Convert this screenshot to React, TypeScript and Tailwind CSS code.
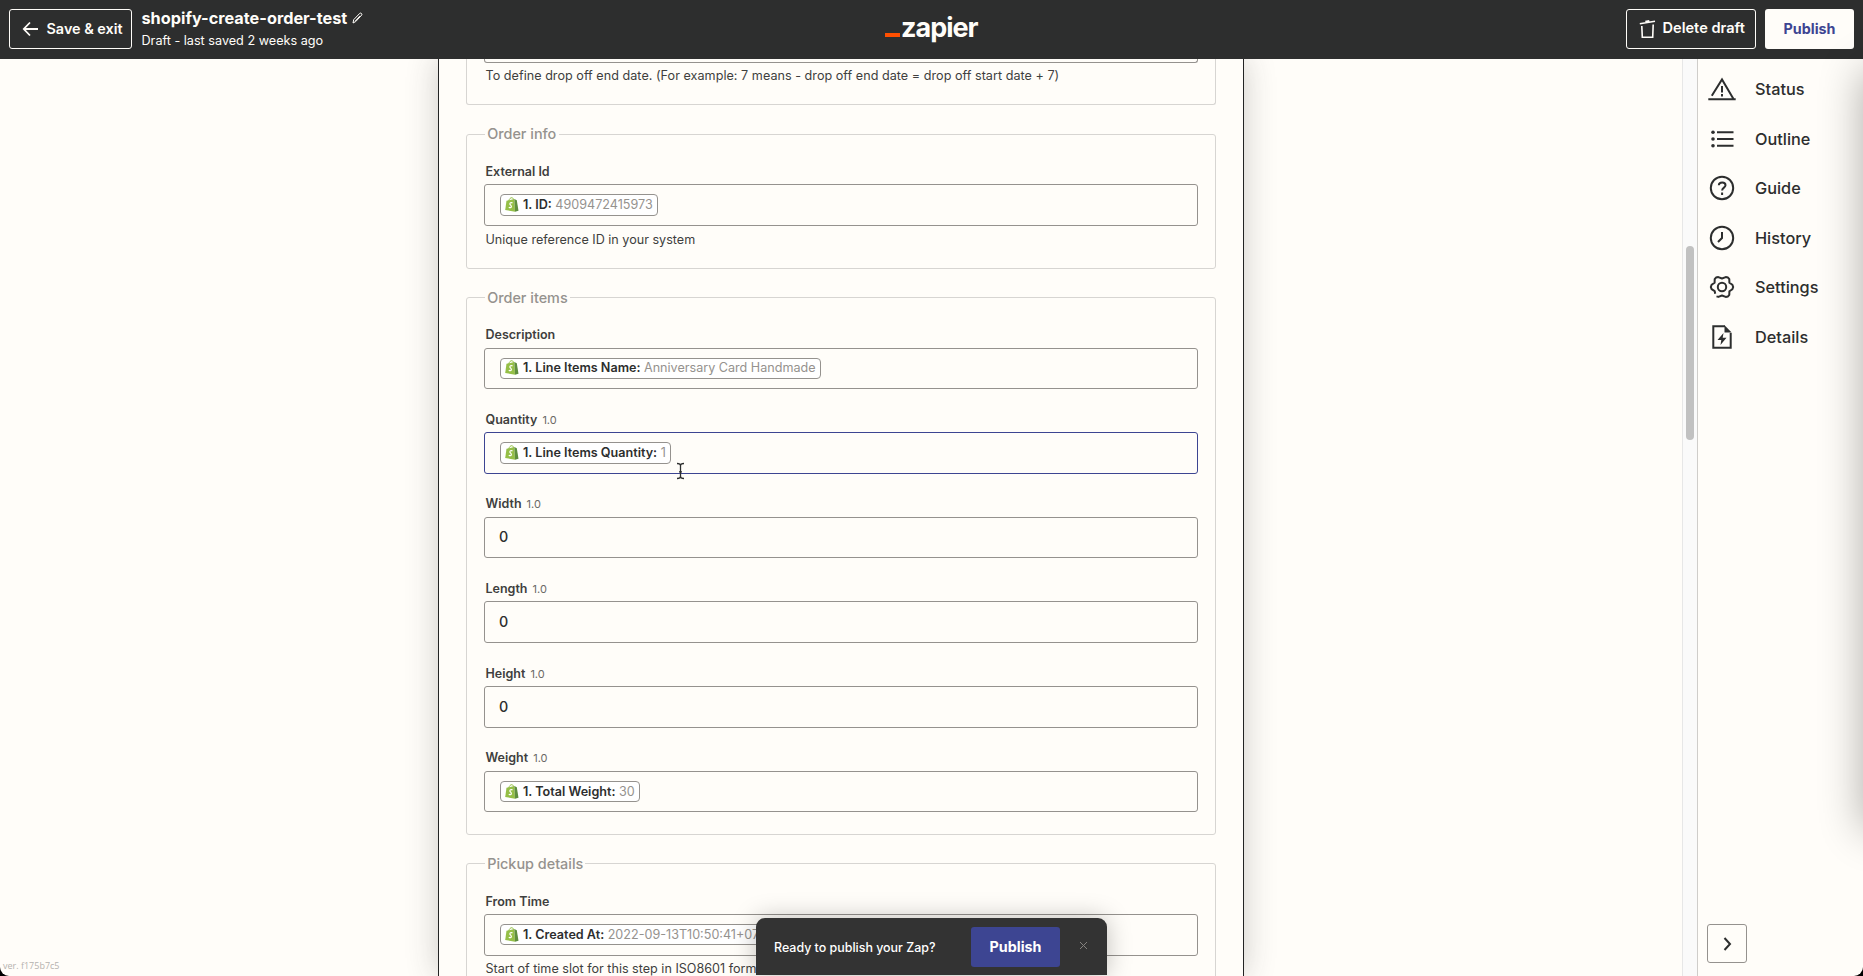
import type { ReactNode } from "react";

function ShopifyBag() {
  return (
    <svg width="14" height="15" viewBox="0 0 14 15" className="-ml-[0.500px] mb-[1px] mr-[0.500px] shrink-0">
      <path d="M3.800 4C4.200 1.900 5.500.6 6.900.7c1.200.1 1.600 1.300 1.600 2.700" fill="none" stroke="#95bf47" strokeWidth="1" />
      <path d="M1.500 3.800 9.300 2 10 14.700.2 12.900z" fill="#95bf47" />
      <path d="M9.300 2 11.800 3.200 13.500 13.700 10 14.700z" fill="#5e8e3e" />
      <path d="M7.500 5.900c-1.500-.7-2.800 0-2.600 1.200.2 1 1.600 1.300 1.500 2.500-.1 1.200-1.500 1.300-2.600.6" fill="none" stroke="#fff" strokeWidth="1.200" />
    </svg>
  );
}

function Pill({ name, value }: { name: string; value: string }) {
  return (
    <span className="flex h-[21.400px] items-center whitespace-nowrap rounded-[4px] border border-[#95928e] bg-white pl-[4.500px] pr-[4.700px] text-[12.600px]">
      <ShopifyBag />
      <b className="ml-[3.500px] mt-[1px] font-semibold text-[#2d2e2e]">{name}</b>
      <span className="ml-[3.500px] mt-[1px] text-[#95928e]">{value}</span>
    </span>
  );
}

type FieldProps = { label: string; hint?: string; help?: string; active?: boolean; children: ReactNode };

function Field({ label, hint, help, active, children }: FieldProps) {
  return (
    <div>
      <div className="mb-[2.450px] flex h-[20.600px] items-end pl-[1.500px] text-[12.500px] leading-5">
        <span className="font-semibold text-[#403f3e]">{label}</span>
        {hint && <span className="ml-[5px] text-[11px] text-[#6b6966]">{hint}</span>}
      </div>
      <div
        className={`flex h-[41.600px] items-center rounded-[3px] border pl-[15px] ${active ? "border-[#3d4592]" : "border-[#95928e]"}`}
      >
        {children}
      </div>
      {help && <Help>{help}</Help>}
    </div>
  );
}

function Help({ children }: { children: ReactNode }) {
  return <p className="mt-[3.700px] h-5 whitespace-nowrap pl-[1.500px] text-[12.600px] leading-5 text-[#403f3e]">{children}</p>;
}

function Group({ title, className, children }: { title: string; className: string; children: ReactNode }) {
  return (
    <fieldset className={`mx-[27px] rounded-[3px] border border-[#d7d5d2] px-[17px] ${className}`}>
      <legend className="ml-[1px] h-5 px-[2.200px] pt-[0.200px] text-[14.400px] font-medium leading-5 text-[#95928e]">
        {title}
      </legend>
      <div className="flex flex-col gap-5 pt-[17.100px]">{children}</div>
    </fieldset>
  );
}

function Zero() {
  return <span className="-ml-[1px] pb-[1px] text-[14.300px] font-medium text-[#2d2e2e]">0</span>;
}

function Icon({ children }: { children: ReactNode }) {
  return (
    <svg width="28" height="28" viewBox="0 0 28 28" fill="none" stroke="#2d2e2e" strokeWidth="2" className="shrink-0">
      {children}
    </svg>
  );
}

const nav: { label: string; icon: ReactNode }[] = [
  {
    label: "Status",
    icon: (
      <>
        <path d="M3.800 20.700 14 4.500l11.500 19.500M.300 24.300h27.400" />
        <path d="M14 11v6.500M14 19v2.500" />
      </>
    ),
  },
  {
    label: "Outline",
    icon: (
      <>
        <path d="M9 7.300h16.500M9 14h16.500M9 20.700h16.500" />
        <g fill="#2d2e2e" stroke="none">
          <circle cx="5" cy="7.300" r="1.800" />
          <circle cx="5" cy="14" r="1.800" />
          <circle cx="5" cy="20.700" r="1.800" />
        </g>
      </>
    ),
  },
  {
    label: "Guide",
    icon: (
      <>
        <circle cx="14" cy="14" r="11.200" />
        <path d="M10.800 11.300c.2-3.700 6.700-3.700 6.700 0 0 2.400-3.300 2.300-3.400 5.200M14.100 18.600v2.300" />
      </>
    ),
  },
  {
    label: "History",
    icon: (
      <>
        <circle cx="14" cy="14" r="11.200" />
        <path d="M14 8v6l-4 4" />
      </>
    ),
  },
  {
    label: "Settings",
    icon: (
      <>
        <circle cx="14" cy="14" r="4.200" />
        <path
          d="M7.200 20.800 6.700 18.200 3.600 16.200 2.800 14 3.600 11.800 6.600 9.700 6.700 6.200 8 4.600 10.300 4.100 14 5.500 17.700 4.100 20 4.600 21.300 6.200 21.400 9.700 24.400 11.800 25.200 14 24.400 16.200 21.400 18.300 21.300 21.800 20 23.400 17.700 23.900 14 22.500 10.300 23.900 8.500 23.400"
          strokeLinejoin="round"
        />
      </>
    ),
  },
  {
    label: "Details",
    icon: (
      <>
        <path d="M17 3.300H5.300v21.400h17.400V10" />
        <path d="M16.500 2.300v7.200h7.200z" fill="#2d2e2e" stroke="none" />
        <path d="m15.500 10-6 7h3.800l-.8 5 6-7.200h-3.800z" fill="#2d2e2e" stroke="none" />
      </>
    ),
  },
];

function Header() {
  return (
    <header className="flex h-[59px] shrink-0 items-center bg-[#2d2e2e] px-[9px] pb-[1px] text-[#fffdf9]">
      <button className="flex h-10 w-[123px] items-center rounded-[3px] border border-[#fffdf9] pl-3 text-[14.400px] font-semibold">
        <svg width="17" height="16" viewBox="0 0 17 16" fill="none" stroke="currentColor" strokeWidth="1.800">
          <path d="M16 8H2M8 1.500 1.800 8 8 14.500" />
        </svg>
        <span className="ml-[7.500px] whitespace-nowrap">Save &amp; exit</span>
      </button>
      <div className="ml-[9.500px] flex w-[743.500px] flex-col">
        <div className="flex h-[22px] items-center gap-[5px] text-[16.300px] font-bold">
          <span className="whitespace-nowrap">shopify-create-order-test</span>
          <svg width="11" height="12" viewBox="0 0 11 12" fill="none" stroke="currentColor" strokeWidth="1" className="mb-[1px]">
            <path d="M1 11 1.700 7.700 7.800 1.300c1-.9 2.800.7 1.900 1.800L3.700 9.600zM3 9.300l5-5.400" />
          </svg>
        </div>
        <div className="h-[22px] text-[12.650px] leading-[23px]">Draft - last saved 2 weeks ago</div>
      </div>
      <div className="flex items-center pb-[2px]">
        <span className="mt-[14px] h-[4px] w-[15px] bg-[#ff4f00]" />
        <span className="ml-px text-[27px] font-bold leading-[30px] tracking-[-1px]">zapier</span>
      </div>
      <div className="ml-auto flex gap-[9px] text-[14.300px]">
        <button className="flex h-10 w-[130px] items-center rounded-[3px] border border-[#fffdf9] pl-3 text-[14.600px] font-semibold">
          <svg width="17" height="20" viewBox="0 0 17 20" fill="none" stroke="currentColor" strokeWidth="1.600">
            <path d="M.8 4.800 16 2.200M6.300 2.600l4-.8M2.800 7l.5 11.200h10.400L14.200 5.500" />
          </svg>
          <span className="ml-[6.500px] whitespace-nowrap">Delete draft</span>
        </button>
        <button className="h-10 w-[89px] rounded-[3px] bg-[#fffdf9] font-bold text-[#3d4592]">Publish</button>
      </div>
    </header>
  );
}

export default function App() {
  return (
    <div className="h-[976px] w-[1863px] overflow-hidden bg-black font-['Inter',sans-serif]">
      <div className="relative flex h-full flex-col overflow-hidden rounded-b-[9px] bg-[#fffdf9]">
        <Header />
        <div className="flex min-h-0 flex-1">
          <main className="flex min-w-0 flex-1 items-end overflow-hidden">
            <div className="w-[438px] shrink-0 pb-[4px] pl-[3px] font-['Open_Sans',sans-serif] text-[9px] leading-3 text-[#b5b2ae]">
              ver. f175b7c5
            </div>
            <div className="h-full w-[806px] shrink-0 border-x border-[#222323] bg-[#fffdf9] shadow-[0_0_30px_rgba(45,46,46,0.24)]">
              <div className="mx-[27px] h-[46px] rounded-b-[3px] border border-t-0 border-[#d7d5d2] px-[17px]">
                <div className="h-[4px] rounded-b-[3px] border border-t-0 border-[#95928e]" />
                <div className="-mt-[1px] tracking-[0.030px]">
                  <Help>To define drop off end date. (For example: 7 means - drop off end date = drop off start date + 7)</Help>
                </div>
              </div>
              <Group title="Order info" className="mt-[19.200px] h-[144.800px]">
                <Field label="External Id" help="Unique reference ID in your system">
                  <Pill name="1. ID:" value="4909472415973" />
                </Field>
              </Group>
              <Group title="Order items" className="mt-[18.500px] h-[547.500px]">
                <Field label="Description">
                  <Pill name="1. Line Items Name:" value="Anniversary Card Handmade" />
                </Field>
                <Field label="Quantity" hint="1.0" active>
                  <Pill name="1. Line Items Quantity:" value="1" />
                </Field>
                <Field label="Width" hint="1.0">
                  <Zero />
                </Field>
                <Field label="Length" hint="1.0">
                  <Zero />
                </Field>
                <Field label="Height" hint="1.0">
                  <Zero />
                </Field>
                <Field label="Weight" hint="1.0">
                  <Pill name="1. Total Weight:" value="30" />
                </Field>
              </Group>
              <Group title="Pickup details" className="mt-[18.900px] h-[200px]">
                <Field label="From Time" help="Start of time slot for this step in ISO8601 format">
                  <Pill name="1. Created At:" value="2022-09-13T10:50:41+07:00" />
                </Field>
              </Group>
            </div>
          </main>
          <div className="w-[15px] shrink-0 border-l border-[#e7e7e7] bg-[#fafafa] pl-[3px] pt-[187px]">
            <div className="h-[194px] w-[8px] rounded-full bg-[#c1c1c1]" />
          </div>
          <aside className="flex w-[166px] shrink-0 flex-col border-l border-[#cfcdca] pb-[13px] pl-[9px] pt-[5.500px]">
            {nav.map((item) => (
              <div key={item.label} className="flex h-[49.500px] items-center gap-[19px] pl-[1px]">
                <Icon>{item.icon}</Icon>
                <span className="text-[16.300px] font-medium text-[#2d2e2e]">{item.label}</span>
              </div>
            ))}
            <button className="mt-auto flex h-[39px] w-10 items-center justify-center rounded-[3px] border border-[#95928e] pl-[1px]">
              <svg width="9" height="14" viewBox="0 0 9 14" fill="none" stroke="#2d2e2e" strokeWidth="2">
                <path d="M1.500 1 7 7l-5.500 6" />
              </svg>
            </button>
          </aside>
        </div>

        <div className="absolute left-[756px] top-[918px] flex h-[57px] w-[351px] items-center rounded-t-[9px] bg-[#333] pl-[18px] text-white shadow-[0_0_24px_rgba(0,0,0,0.250)]">
          <span className="w-[197px] whitespace-nowrap pt-[3px] text-[12.450px] font-medium">Ready to publish your Zap?</span>
          <button className="h-10 w-[89px] rounded-[3px] bg-[#3d4592] text-[14.300px] font-bold">Publish</button>
          <svg width="9" height="9" viewBox="0 0 9 9" stroke="#85827f" strokeWidth="1" className="mb-[2px] ml-[19px]">
            <path d="m1 1 7 7M8 1 1 8" />
          </svg>
        </div>

        <div className="pointer-events-none absolute left-[1863px] top-[70px] h-[760px] w-[60px] shadow-[0_0_44px_rgba(0,0,0,0.320)]" />

        <svg width="9" height="18" viewBox="0 0 9 18" fill="none" className="absolute left-[676px] top-[462px]">
          <path d="M1 1.500c2 0 3.500.5 3.500 2v11c0 1.500-1.500 2-3.500 2M8 1.500c-2 0-3.500.5-3.500 2v11c0 1.500 1.500 2 3.500 2M3 9.800h3" stroke="#2d2e2e" strokeWidth="1.300" />
        </svg>
      </div>
    </div>
  );
}
